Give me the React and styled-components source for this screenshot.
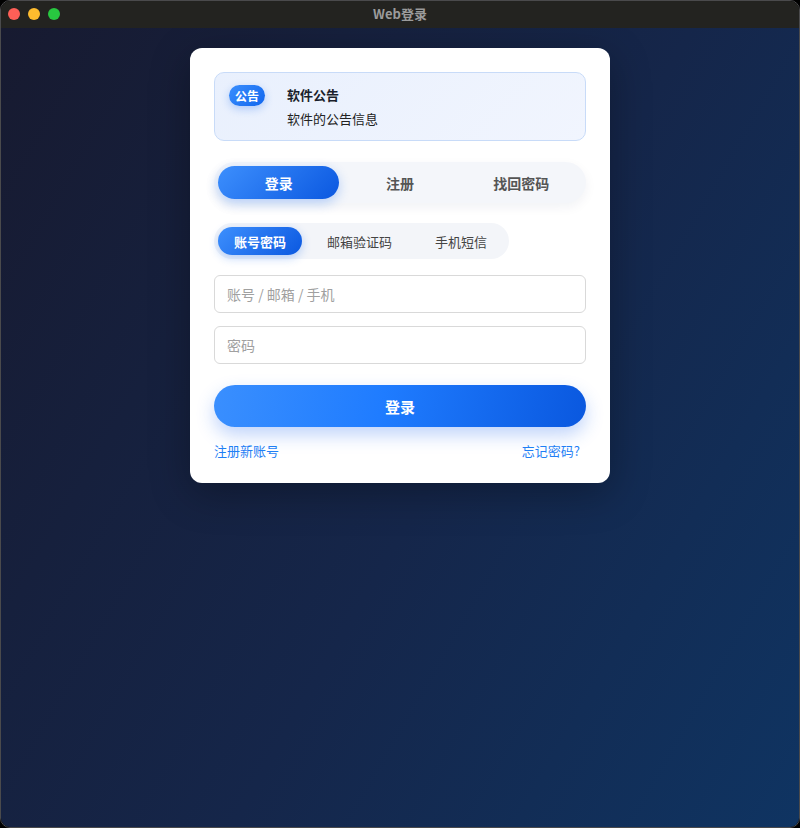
import styled, { createGlobalStyle } from "styled-components";

const GlobalStyle = createGlobalStyle`
  html, body {
    margin: 0;
    padding: 0;
    background: #000;
  }
  body {
    font-family: "Noto Sans CJK SC", "Noto Sans", sans-serif;
  }
  * { box-sizing: border-box; }
`;

const Window = styled.div`
  width: 800px;
  height: 828px;
  display: flex;
  flex-direction: column;
  border: 1px solid #4a4a4c;
  border-radius: 10px;
  overflow: hidden;
`;

const TitleBar = styled.div`
  height: 27px;
  flex: none;
  position: relative;
  display: flex;
  align-items: center;
  justify-content: center;
  background: #232320;
`;

const Lights = styled.div`
  position: absolute;
  left: 7px;
  top: 7px;
  display: flex;
  gap: 8px;
`;

const Light = styled.span`
  width: 12px;
  height: 12px;
  border-radius: 50%;
  background: ${(p) => p.color};
`;

const Title = styled.div`
  font-size: 13px;
  font-weight: 700;
  color: #9b9b9b;
  margin-top: -2px;
`;

const Stage = styled.div`
  flex: 1;
  display: flex;
  justify-content: center;
  align-items: flex-start;
  padding-top: 20px;
  background: linear-gradient(120deg, #171a30 0%, #15264a 55%, #0f3462 100%);
`;

const Card = styled.div`
  width: 420px;
  background: #fff;
  border-radius: 12px;
  padding: 24px 24px 23px;
  display: flex;
  flex-direction: column;
  box-shadow: 0 10px 40px rgba(0, 0, 0, 0.3);
`;

const Notice = styled.div`
  height: 69px;
  display: flex;
  align-items: flex-start;
  gap: 22px;
  padding: 12px 14px;
  border: 1px solid #c8dbf8;
  border-radius: 10px;
  background: linear-gradient(135deg, #e9f0fd 0%, #f1f5fe 100%);
`;

const Badge = styled.span`
  flex: none;
  height: 21px;
  padding: 0 6px;
  display: flex;
  align-items: center;
  border-radius: 11px;
  font-size: 12px;
  font-weight: 700;
  color: #fff;
  background: linear-gradient(135deg, #3b8ffd, #1166ee);
  box-shadow: 0 3px 8px rgba(30, 110, 240, 0.3);
`;

const NoticeText = styled.div`
  display: flex;
  flex-direction: column;
  gap: 6px;
  padding-top: 1px;
`;

const NoticeTitle = styled.div`
  font-size: 13px;
  font-weight: 700;
  color: #1a1f2b;
  line-height: 18px;
`;

const NoticeBody = styled.div`
  font-size: 13px;
  color: #222;
  line-height: 18px;
`;

const Tabs = styled.div`
  margin-top: 21px;
  display: grid;
  grid-template-columns: repeat(3, 1fr);
  padding: 4px;
  border-radius: 22px;
  background: #f4f6fa;
  box-shadow: 0 4px 12px rgba(20, 40, 80, 0.06);
`;

const Tab = styled.div`
  height: 33px;
  display: flex;
  align-items: center;
  justify-content: center;
  border-radius: 17px;
  font-size: 14px;
  font-weight: 700;
  color: ${(p) => (p.active ? "#fff" : "#555")};
  background: ${(p) =>
    p.active ? "linear-gradient(135deg, #3d8ffd 0%, #0b58e0 100%)" : "transparent"};
  box-shadow: ${(p) => (p.active ? "0 4px 12px rgba(30, 110, 240, 0.3)" : "none")};
`;

const SubTabs = styled.div`
  margin-top: 20px;
  align-self: flex-start;
  display: flex;
  padding: 4px;
  border-radius: 18px;
  background: #f3f5f9;
`;

const SubTab = styled.div`
  height: 28px;
  padding: 0 ${(p) => p.pad}px;
  display: flex;
  align-items: center;
  border-radius: 14px;
  font-size: 13px;
  font-weight: ${(p) => (p.active ? 700 : 400)};
  color: ${(p) => (p.active ? "#fff" : "#444")};
  background: ${(p) =>
    p.active ? "linear-gradient(135deg, #3d8ffd 0%, #0b58e0 100%)" : "transparent"};
  box-shadow: ${(p) => (p.active ? "0 3px 10px rgba(30, 110, 240, 0.3)" : "none")};
`;

const Fields = styled.div`
  margin-top: 16px;
  display: flex;
  flex-direction: column;
  gap: 13px;
`;

const Input = styled.input`
  height: 38px;
  width: 100%;
  padding: 0 12px;
  border: 1px solid #d9d9d9;
  border-radius: 6px;
  font-family: inherit;
  font-size: 14px;
  color: #333;
  outline: none;
  &::placeholder {
    color: #a0a0a0;
  }
`;

const SubmitButton = styled.button`
  margin-top: 21px;
  height: 42px;
  border: none;
  border-radius: 21px;
  font-family: inherit;
  font-size: 15px;
  font-weight: 700;
  color: #fff;
  background: linear-gradient(100deg, #3a8ffe 0%, #1f7cff 45%, #0a58df 100%);
  box-shadow: 0 8px 18px rgba(30, 100, 240, 0.28);
`;

const Links = styled.div`
  margin-top: 15px;
  display: flex;
  justify-content: space-between;
  padding-right: 6px;
`;

const Link = styled.a`
  font-size: 13px;
  line-height: 18px;
  color: #1f7ff5;
  text-decoration: none;
`;

const mainTabs = ["登录", "注册", "找回密码"];
const subTabs = [
  { label: "账号密码", pad: 16 },
  { label: "邮箱验证码", pad: 25 },
  { label: "手机短信", pad: 18 },
];

export default function App() {
  return (
    <>
      <GlobalStyle />
      <Window>
        <TitleBar>
          <Lights>
            <Light color="#fe5f57" />
            <Light color="#febc2e" />
            <Light color="#28c840" />
          </Lights>
          <Title>Web登录</Title>
        </TitleBar>
        <Stage>
          <Card>
            <Notice>
              <Badge>公告</Badge>
              <NoticeText>
                <NoticeTitle>软件公告</NoticeTitle>
                <NoticeBody>软件的公告信息</NoticeBody>
              </NoticeText>
            </Notice>
            <Tabs>
              {mainTabs.map((t, i) => (
                <Tab key={t} active={i === 0}>
                  {t}
                </Tab>
              ))}
            </Tabs>
            <SubTabs>
              {subTabs.map((t, i) => (
                <SubTab key={t.label} active={i === 0} pad={t.pad}>
                  {t.label}
                </SubTab>
              ))}
            </SubTabs>
            <Fields>
              <Input placeholder="账号 / 邮箱 / 手机" />
              <Input type="password" placeholder="密码" />
            </Fields>
            <SubmitButton>登录</SubmitButton>
            <Links>
              <Link>注册新账号</Link>
              <Link>忘记密码?</Link>
            </Links>
          </Card>
        </Stage>
      </Window>
    </>
  );
}
